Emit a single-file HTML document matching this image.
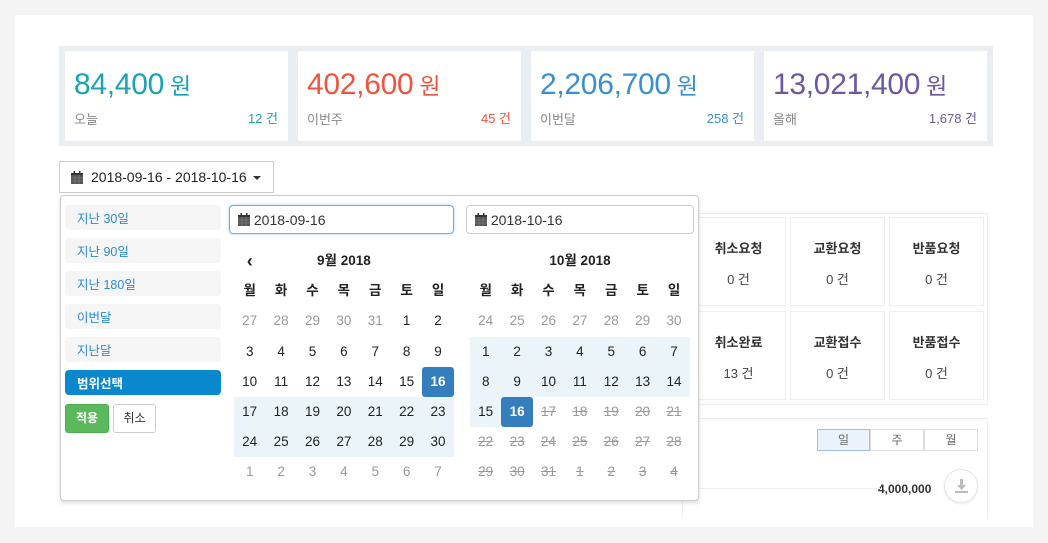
<!DOCTYPE html>
<html><head><meta charset="utf-8"><style>
*{box-sizing:border-box;margin:0;padding:0}
body{width:1048px;height:543px;background:#f4f4f4;font-family:"Liberation Sans","Noto Sans CJK KR",sans-serif;position:relative;overflow:hidden;color:#333}
.abs{position:absolute}
.panel{left:15px;top:15px;width:1018px;height:512px;background:#fff}
.strip{left:59px;top:46px;width:934px;height:100px;background:#eaeef3}
.card{top:51px;height:90px;background:#fff;width:223px}
.card .n{position:absolute;left:9px;top:16px;font-size:30px;letter-spacing:-0.3px}
.card .n span{font-size:23px;margin-left:6px}
.card .l{position:absolute;left:9px;top:58px;font-size:13px;color:#888}
.card .r{position:absolute;right:10px;top:57px;font-size:13px}
.btn{left:59px;top:161px;width:215px;height:32px;border:1px solid #ccc;background:#fff;font-size:14px;color:#222}
.pop{left:60px;top:195px;width:639px;height:306px;background:#fff;border:1px solid #ccc;border-radius:4px;box-shadow:0 2px 5px rgba(0,0,0,.15)}
.rng{position:absolute;left:4px;width:156px;height:25px;background:#f5f5f5;border-radius:4px;color:#2a8ad4;font-size:12.5px;padding:3px 0 0 12px}
.inp{position:absolute;height:29px;border:1px solid #ccc;border-radius:4px;font-size:14px;padding:6px 0 0 8px;color:#333}
.grid{position:absolute;width:220px}
.row{display:flex;height:30.2px}
.row span{width:31.4px;text-align:center;line-height:30px;font-size:13.5px;color:#222}
.o{color:#999!important}
.s{color:#999!important;text-decoration:line-through}
.h{background:#ebf4f8}
.sel{background:#357ebd;color:#fff!important;border-radius:3px;font-weight:bold}
.wd span{font-weight:bold}
.bg{background:#fff;border:1px solid #eef0f3}
.st{position:absolute;width:95px;height:89px;background:#fff;border:1px solid #eceef2;text-align:center}
.st b{display:block;margin-top:20px;font-size:13px;color:#333}
.st i{display:block;font-style:normal;margin-top:12px;font-size:13px;color:#444}
svg.c{vertical-align:-1px}
</style></head><body>
<div class="abs panel"></div>
<div class="abs strip"></div>
<div class="abs card" style="left:65px"><div class="n" style="color:#1aa3b3">84,400<span>원</span></div><div class="l">오늘</div><div class="r" style="color:#1aa3b3">12 건</div></div>
<div class="abs card" style="left:298px"><div class="n" style="color:#f0533f">402,600<span>원</span></div><div class="l">이번주</div><div class="r" style="color:#f0533f">45 건</div></div>
<div class="abs card" style="left:531px"><div class="n" style="color:#3a8fd0">2,206,700<span>원</span></div><div class="l">이번달</div><div class="r" style="color:#3a8fd0">258 건</div></div>
<div class="abs card" style="left:764px"><div class="n" style="color:#6c57a0">13,021,400<span>원</span></div><div class="l">올해</div><div class="r" style="color:#6c57a0">1,678 건</div></div>

<div class="abs btn"><svg class="c" style="position:absolute;left:11px;top:9px" width="12" height="13" viewBox="0 0 12 13"><rect x="0" y="2" width="12" height="11" fill="#555"/><rect x="0" y="2" width="12" height="2" fill="#333"/><rect x="2.5" y="0" width="1.5" height="3" fill="#333"/><rect x="8" y="0" width="1.5" height="3" fill="#333"/><path d="M0 7h12M0 10h12M4 4v9M8 4v9" stroke="#888" stroke-width=".6"/></svg><span style="position:absolute;left:31px;top:7px">2018-09-16 - 2018-10-16</span><span style="position:absolute;left:193px;top:14px;border:4px solid transparent;border-top:4px solid #333;border-bottom:0"></span></div>

<div class="abs bg" style="left:682px;top:213px;width:306px;height:192px"></div>
<div class="st" style="left:691px;top:217px"><b>취소요청</b><i>0 건</i></div>
<div class="st" style="left:790px;top:217px"><b>교환요청</b><i>0 건</i></div>
<div class="st" style="left:889px;top:217px"><b>반품요청</b><i>0 건</i></div>
<div class="st" style="left:691px;top:311px"><b>취소완료</b><i>13 건</i></div>
<div class="st" style="left:790px;top:311px"><b>교환접수</b><i>0 건</i></div>
<div class="st" style="left:889px;top:311px"><b>반품접수</b><i>0 건</i></div>
<div class="abs bg" style="left:682px;top:418px;width:306px;height:100px;border-bottom:none"></div>
<div class="abs" style="left:817px;top:429px;width:53px;height:22px;border:1px solid #9ec1ea;background:#eaf3fc;text-align:center;font-size:12px;line-height:20px;color:#666">일</div>
<div class="abs" style="left:870px;top:429px;width:54px;height:22px;border:1px solid #ddd;text-align:center;font-size:12px;line-height:20px;color:#666">주</div>
<div class="abs" style="left:924px;top:429px;width:54px;height:22px;border:1px solid #ddd;text-align:center;font-size:12px;line-height:20px;color:#666">월</div>
<div class="abs" style="left:878px;top:482px;font-size:12px;font-weight:bold;color:#333">4,000,000</div>
<div class="abs" style="left:944px;top:469px;width:34px;height:34px;border-radius:50%;border:1px solid #e5e5e5;background:#fff;box-shadow:0 1px 2px rgba(0,0,0,.08)"><svg style="position:absolute;left:10px;top:9px" width="13" height="14" viewBox="0 0 13 14"><path d="M5 0h3v6h3l-4.5 5L2 6h3z" fill="#bbb"/><rect x="0" y="12" width="13" height="2" fill="#bbb"/></svg></div>
<div class="abs" style="left:700px;top:488px;width:180px;border-top:1px solid #eee"></div>

<div class="abs pop">
<div class="rng" style="top:9px">지난 30일</div>
<div class="rng" style="top:42px">지난 90일</div>
<div class="rng" style="top:75px">지난 180일</div>
<div class="rng" style="top:108px">이번달</div>
<div class="rng" style="top:141px">지난달</div>
<div class="rng" style="top:174px;background:#0a88ce;color:#fff;font-weight:bold">범위선택</div>
<div style="position:absolute;left:4px;top:208px;width:44px;height:29px;background:#5cb85c;border:1px solid #4cae4c;border-radius:3px;color:#fff;font-size:12px;text-align:center;line-height:27px;font-weight:bold">적용</div>
<div style="position:absolute;left:52px;top:208px;width:43px;height:29px;background:#fff;border:1px solid #ccc;border-radius:3px;color:#333;font-size:12px;text-align:center;line-height:27px">취소</div>

<div class="inp" style="left:168px;top:9px;width:225px;border-color:#66afe9;box-shadow:0 0 3px rgba(102,175,233,.5)"><svg class="c" width="12" height="13" viewBox="0 0 12 13"><rect x="0" y="2" width="12" height="11" fill="#555"/><rect x="0" y="2" width="12" height="2" fill="#333"/><rect x="2.5" y="0" width="1.5" height="3" fill="#333"/><rect x="8" y="0" width="1.5" height="3" fill="#333"/><path d="M0 7h12M0 10h12M4 4v9M8 4v9" stroke="#888" stroke-width=".6"/></svg> 2018-09-16</div>
<div class="inp" style="left:405px;top:9px;width:228px"><svg class="c" width="12" height="13" viewBox="0 0 12 13"><rect x="0" y="2" width="12" height="11" fill="#555"/><rect x="0" y="2" width="12" height="2" fill="#333"/><rect x="2.5" y="0" width="1.5" height="3" fill="#333"/><rect x="8" y="0" width="1.5" height="3" fill="#333"/><path d="M0 7h12M0 10h12M4 4v9M8 4v9" stroke="#888" stroke-width=".6"/></svg> 2018-10-16</div>

<div class="grid" style="left:173px;top:50px">
<div class="row"><span style="font-size:18px;font-weight:bold">‹</span><span style="width:157px;font-weight:bold">9월 2018</span></div>
<div class="row wd"><span>월</span><span>화</span><span>수</span><span>목</span><span>금</span><span>토</span><span>일</span></div>
<div class="row"><span class="o">27</span><span class="o">28</span><span class="o">29</span><span class="o">30</span><span class="o">31</span><span>1</span><span>2</span></div>
<div class="row"><span>3</span><span>4</span><span>5</span><span>6</span><span>7</span><span>8</span><span>9</span></div>
<div class="row"><span>10</span><span>11</span><span>12</span><span>13</span><span>14</span><span>15</span><span class="sel">16</span></div>
<div class="row h"><span>17</span><span>18</span><span>19</span><span>20</span><span>21</span><span>22</span><span>23</span></div>
<div class="row h"><span>24</span><span>25</span><span>26</span><span>27</span><span>28</span><span>29</span><span>30</span></div>
<div class="row"><span class="o">1</span><span class="o">2</span><span class="o">3</span><span class="o">4</span><span class="o">5</span><span class="o">6</span><span class="o">7</span></div>
</div>

<div class="grid" style="left:409px;top:50px">
<div class="row"><span style="width:220px;font-weight:bold">10월 2018</span></div>
<div class="row wd"><span>월</span><span>화</span><span>수</span><span>목</span><span>금</span><span>토</span><span>일</span></div>
<div class="row"><span class="o">24</span><span class="o">25</span><span class="o">26</span><span class="o">27</span><span class="o">28</span><span class="o">29</span><span class="o">30</span></div>
<div class="row h"><span>1</span><span>2</span><span>3</span><span>4</span><span>5</span><span>6</span><span>7</span></div>
<div class="row h"><span>8</span><span>9</span><span>10</span><span>11</span><span>12</span><span>13</span><span>14</span></div>
<div class="row"><span class="h">15</span><span class="sel">16</span><span class="s">17</span><span class="s">18</span><span class="s">19</span><span class="s">20</span><span class="s">21</span></div>
<div class="row"><span class="s">22</span><span class="s">23</span><span class="s">24</span><span class="s">25</span><span class="s">26</span><span class="s">27</span><span class="s">28</span></div>
<div class="row"><span class="s">29</span><span class="s">30</span><span class="s">31</span><span class="s">1</span><span class="s">2</span><span class="s">3</span><span class="s">4</span></div>
</div>
</div>
</body></html>
